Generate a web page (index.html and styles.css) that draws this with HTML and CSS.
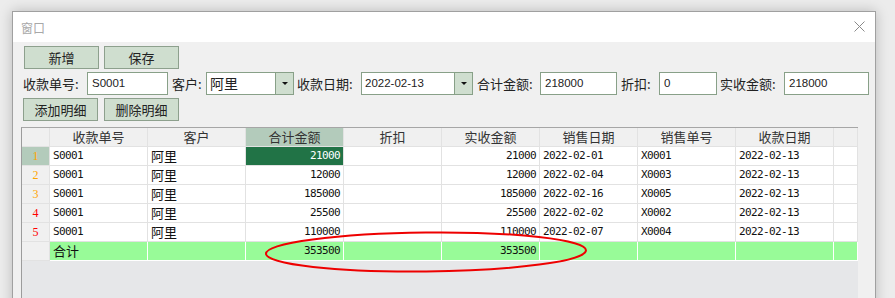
FILE: index.html
```html
<!DOCTYPE html>
<html lang="zh">
<head>
  <meta charset="UTF-8">
  <title>窗口</title>
  <link rel="stylesheet" href="styles.css">
</head>
<body>
<div class="window">
  <!-- 标题栏 -->
  <div class="titlebar">
    <span class="title">窗口</span>
    <svg class="close" width="11" height="11" viewBox="0 0 11 11">
      <path d="M0.5 0.5 L10.5 10.5 M10.5 0.5 L0.5 10.5" stroke="#8a8a8a" stroke-width="1" fill="none"/>
    </svg>
  </div>

  <div class="content">
    <!-- 工具按钮 -->
    <div class="toolbar first">
      <button class="btn">新增</button>
      <button class="btn">保存</button>
    </div>

    <!-- 表头字段 -->
    <div class="fields">
      <label class="lbl w64">收款单号:</label>
      <div class="input w81">S0001</div>
      <label class="lbl w34">客户:</label>
      <div class="combo w88"><span class="combo-text cn">阿里</span><span class="combo-btn"><i class="tri"></i></span></div>
      <label class="lbl w64 tight">收款日期:</label>
      <div class="combo w112"><span class="combo-text">2022-02-13</span><span class="combo-btn"><i class="tri"></i></span></div>
      <label class="lbl w63">合计金额:</label>
      <div class="input w77">218000</div>
      <label class="lbl w38">折扣:</label>
      <div class="input w58">0</div>
      <label class="lbl w64 tight">实收金额:</label>
      <div class="input w85">218000</div>
    </div>

    <div class="toolbar second">
      <button class="btn">添加明细</button>
      <button class="btn">删除明细</button>
    </div>

    <!-- 明细表格 -->
    <div class="grid">
      <table>
        <colgroup>
          <col style="width:28px"><col style="width:98px"><col style="width:98px"><col style="width:98px"><col style="width:98px">
          <col style="width:98px"><col style="width:98px"><col style="width:98px"><col style="width:98px"><col style="width:24px">
        </colgroup>
        <thead>
          <tr>
            <th></th><th>收款单号</th><th>客户</th><th class="sel-head">合计金额</th><th>折扣</th>
            <th>实收金额</th><th>销售日期</th><th>销售单号</th><th>收款日期</th><th></th>
          </tr>
        </thead>
        <tbody>
          <tr>
            <td class="rh sel-head orange">1</td><td>S0001</td><td class="cn">阿里</td><td class="num cur">21000</td><td></td>
            <td class="num">21000</td><td>2022-02-01</td><td>X0001</td><td>2022-02-13</td><td></td>
          </tr>
          <tr>
            <td class="rh orange">2</td><td>S0001</td><td class="cn">阿里</td><td class="num">12000</td><td></td>
            <td class="num">12000</td><td>2022-02-04</td><td>X0003</td><td>2022-02-13</td><td></td>
          </tr>
          <tr>
            <td class="rh orange">3</td><td>S0001</td><td class="cn">阿里</td><td class="num">185000</td><td></td>
            <td class="num">185000</td><td>2022-02-16</td><td>X0005</td><td>2022-02-13</td><td></td>
          </tr>
          <tr>
            <td class="rh red">4</td><td>S0001</td><td class="cn">阿里</td><td class="num">25500</td><td></td>
            <td class="num">25500</td><td>2022-02-02</td><td>X0002</td><td>2022-02-13</td><td></td>
          </tr>
          <tr>
            <td class="rh red">5</td><td>S0001</td><td class="cn">阿里</td><td class="num">110000</td><td></td>
            <td class="num">110000</td><td>2022-02-07</td><td>X0004</td><td>2022-02-13</td><td></td>
          </tr>
          <tr class="total">
            <td class="rh"></td><td class="cn">合计</td><td></td><td class="num">353500</td><td></td>
            <td class="num">353500</td><td></td><td></td><td></td><td></td>
          </tr>
        </tbody>
      </table>
      <!-- 红圈标注 -->
      <svg class="mark" width="360" height="60" viewBox="0 0 360 60">
        <ellipse cx="180" cy="30" rx="160" ry="19.5" fill="none" stroke="#ee0000" stroke-width="2" transform="rotate(-0.6 180 30)"/>
      </svg>
    </div>
  </div>
</div>
</body>
</html>
```

FILE: styles.css
```css
/* 全局 */
body {
  margin: 0;
  background: #ececec;
  font-family: "Noto Sans CJK SC", sans-serif;
  font-size: 12px;
  color: #222;
  overflow: hidden;
  height: 298px;
}
/* 窗口 */
.window {
  margin: 11px 0 0 12px;
  width: 862px;
  height: 320px;
  border: 1px solid #a0a0a0;
  background: #f0f0f0;
  box-shadow: 0 0 12px rgba(0,0,0,0.22);
}
.titlebar {
  height: 30px;
  background: #fff;
  display: flex;
  align-items: center;
  justify-content: space-between;
  padding: 0 10px 0 8px;
}
.title {
  color: #a8a8a8;
  font-size: 12px;
}
.close {
  margin-top: -2px;
}
.content {
  padding: 4px 0 0 8px;
}
/* 按钮 */
.toolbar {
  display: flex;
  gap: 6px;
  padding-left: 3px;
}
.toolbar.first {
  gap: 5px;
}
.toolbar.second {
  padding-left: 2px;
  margin-top: 3px;
}
.btn {
  width: 75px;
  height: 23px;
  margin: 0;
  padding: 0;
  background: #cfdecf;
  border: 1px solid #8da08d;
  font-family: "Noto Sans CJK SC", sans-serif;
  font-size: 13px;
  color: #222;
  line-height: 20px;
}
/* 字段行 */
.fields {
  display: flex;
  align-items: center;
  height: 23px;
  margin-top: 3px;
  padding-left: 2px;
}
.lbl {
  font-size: 13px;
  color: #222;
  flex: none;
  white-space: nowrap;
  line-height: 23px;
}
.input + .lbl, .combo + .lbl { margin-left: 4px; }
.tight { margin-left: 3px !important; }
.w34 { width: 34px; }
.w38 { width: 38px; }
.w58 { width: 58px; }
.w63 { width: 63px; }
.w64 { width: 64px; }
.w77 { width: 77px; }
.w81 { width: 81px; }
.w85 { width: 85px; }
.w88 { width: 88px; }
.w112 { width: 112px; }
.input {
  box-sizing: border-box;
  flex: none;
  height: 23px;
  border: 1px solid #88a088;
  background: #fff;
  font-family: "Liberation Sans", sans-serif;
  font-size: 11.5px;
  line-height: 21px;
  padding-left: 4px;
}
.combo {
  box-sizing: border-box;
  height: 23px;
  border: 1px solid #88a088;
  background: #fff;
  display: flex;
  flex: none;
}
.combo-text {
  flex: 1;
  padding-left: 3px;
  font-family: "Liberation Sans", sans-serif;
  font-size: 11.5px;
  line-height: 21px;
}
.combo-text.cn {
  font-family: "Noto Sans CJK SC", sans-serif;
  font-size: 14px;
}
.combo-btn {
  width: 17px;
  border-left: 1px solid #88a088;
  background: #cfdecf;
  display: flex;
  align-items: center;
  justify-content: center;
}
.tri {
  width: 0;
  height: 0;
  border-left: 3px solid transparent;
  border-right: 3px solid transparent;
  border-top: 3px solid #111;
}
/* 表格 */
.grid {
  position: relative;
  margin-top: 6px;
  width: 836px;
  height: 200px;
  border-left: 1px solid #9c9c9c;
  border-top: 1px solid #a6a6a6;
  background: #e6e7e9;
}
table {
  table-layout: fixed;
  border-collapse: separate;
  border-spacing: 0;
  width: 836px;
}
th, td {
  box-sizing: border-box;
  height: 19px;
  padding: 0 3px;
  border-right: 1px solid #e2e2e2;
  border-bottom: 1px solid #e2e2e2;
  white-space: nowrap;
}
th {
  background: #f0f0f0;
  font-weight: normal;
  font-size: 13px;
  color: #333;
  line-height: 18px;
}
td {
  background: #fff;
  font-family: "DejaVu Sans Mono", monospace;
  font-size: 11px;
  letter-spacing: -0.62px;
  color: #111;
  line-height: 18px;
}
td.cn {
  font-family: "Noto Sans CJK SC", sans-serif;
  font-size: 13px;
  letter-spacing: 0;
  line-height: 18px;
}
td.num {
  text-align: right;
}
td.rh {
  background: #f0f0f0;
  text-align: center;
  font-family: "Liberation Serif", serif;
  font-size: 12px;
  letter-spacing: 0;
}
.sel-head,
td.sel-head {
  background: #b3cbbb;
}
td.cur {
  background: #217346;
  color: #fff;
}
.orange { color: #ffa500; }
.red { color: #ff0000; }
.total td {
  background: #98fb98;
  border-color: #fff;
}
.total td.rh {
  background: #f0f0f0;
  border-right-color: #e2e2e2;
  border-bottom-color: #e2e2e2;
}
/* 红圈 */
.mark {
  position: absolute;
  left: 224px;
  top: 94px;
}
```
